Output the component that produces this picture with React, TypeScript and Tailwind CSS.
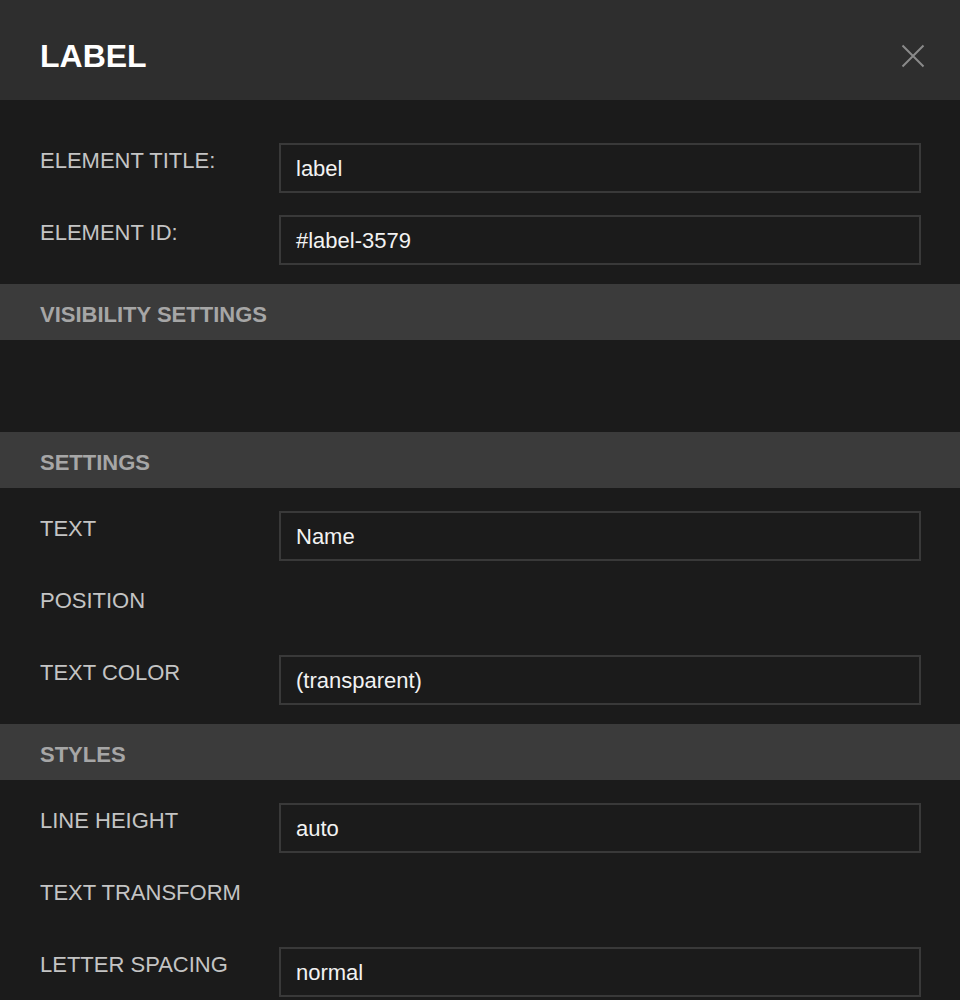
const font = { fontFamily: '"Liberation Sans", Arial, sans-serif' };

type Row = { label: string; value?: string };

function FieldRow({ label, value }: Row) {
  return (
    <div className="flex items-start h-[72px] pt-[23px]">
      <div className="w-[239px] shrink-0 pt-[1px] text-[22px] leading-normal text-[#c4c4c4]">
        {label}
      </div>
      {value !== undefined && (
        <div className="flex-1 h-[50px] border-2 border-[#393939] bg-[#1b1b1b] flex items-center pl-[15px] text-[22px] text-[#f2f2f2]">
          {value}
        </div>
      )}
    </div>
  );
}

function SectionHeader({ title }: { title: string }) {
  return (
    <div className="h-[56px] bg-[#3b3b3b] flex items-center px-10 pt-[5px] text-[22px] font-bold text-[#a6a6a6]">
      {title}
    </div>
  );
}

const settings: Row[] = [
  { label: "TEXT", value: "Name" },
  { label: "POSITION" },
  { label: "TEXT COLOR", value: "(transparent)" },
];

const styles: Row[] = [
  { label: "LINE HEIGHT", value: "auto" },
  { label: "TEXT TRANSFORM" },
  { label: "LETTER SPACING", value: "normal" },
];

export default function App() {
  return (
    <div className="w-[960px] h-[1000px] overflow-hidden bg-[#1b1b1b]" style={font}>
      <div className="h-[100px] bg-[#2e2e2e] flex items-center justify-between pl-10 pr-[35px] pt-3">
        <h1 className="text-[32px] font-bold text-white">LABEL</h1>
        <svg width="24" height="24" viewBox="0 0 24 24" className="-mt-[1px]">
          <path d="M1.5 1.5L22.5 22.5M22.5 1.5L1.5 22.5" stroke="#8a8a8a" strokeWidth="2" />
        </svg>
      </div>

      <div className="pl-10 pr-[39px] pt-5 pb-5">
        <FieldRow label="ELEMENT TITLE:" value="label" />
        <FieldRow label="ELEMENT ID:" value="#label-3579" />
      </div>

      <SectionHeader title="VISIBILITY SETTINGS" />
      <div className="h-[92px]" />

      <SectionHeader title="SETTINGS" />
      <div className="pl-10 pr-[39px] pb-5">
        {settings.map((r) => (
          <FieldRow key={r.label} {...r} />
        ))}
      </div>

      <SectionHeader title="STYLES" />
      <div className="pl-10 pr-[39px] pb-5">
        {styles.map((r) => (
          <FieldRow key={r.label} {...r} />
        ))}
      </div>
    </div>
  );
}
